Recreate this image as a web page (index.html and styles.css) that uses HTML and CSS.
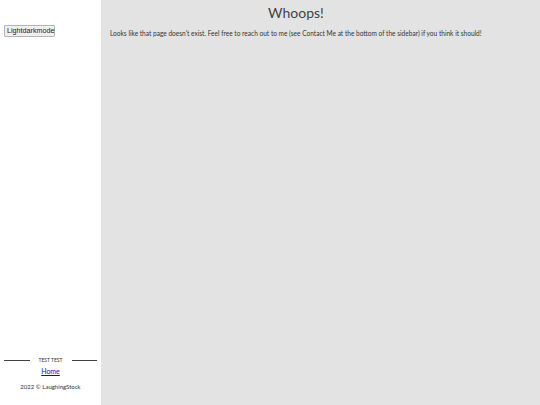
FILE: index.html
```html
<!DOCTYPE html>
<html>
<head>
<meta charset="utf-8">
<link rel="stylesheet" href="styles.css">
</head>
<body>
<div class="layout">
  <aside class="sidebar">
    <div class="top">
      <button class="toggle">Lightdarkmode</button>
    </div>
    <div class="foot">
      <div class="divider"><span class="line"></span><span class="label">TEST TEST</span><span class="line"></span></div>
      <a class="home" href="#">Home</a>
      <div class="copy">2022 © LaughingStock</div>
    </div>
  </aside>
  <main class="main">
    <h1 class="title">Whoops!</h1>
    <p class="msg">Looks like that page doesn't exist. Feel free to reach out to me (see Contact Me at the bottom of the sidebar) if you think it should!</p>
  </main>
</div>
</body>
</html>
```
FILE: styles.css
```css
html, body { margin: 0; padding: 0; }
body { font-family: Lato, "Liberation Sans", sans-serif; color: #333; }
.layout { display: flex; height: 405px; }
.sidebar { width: 101px; background: #fff; display: flex; flex-direction: column; justify-content: space-between; }
.top { padding: 25px 0 0 4px; }
.toggle { display: block; font-family: "Liberation Sans", Arial, sans-serif; font-size: 7.2px; line-height: 8px; padding: 1px 2px; color: #222; background: #efefef; border: 1px solid #b5b5b5; border-radius: 1px; width: 51px; }
.foot { display: flex; flex-direction: column; align-items: center; padding: 0 4px 15px; }
.divider { display: flex; align-items: center; width: 100%; gap: 9px; margin-bottom: 1px; }
.line { flex: 1; height: 1px; background: #444; }
.label { font-size: 5px; color: #333; }
.home { font-size: 7px; color: #1a0dab; margin-top: 3px; }
.copy { font-size: 6px; color: #333; margin-top: 8px; }
.main { flex: 1; background: #e3e3e3; padding: 0 58px 0 9px; }
.title { font-size: 14px; font-weight: 400; text-align: center; margin: 4px 0 0; color: #444; }
.msg { font-size: 6.55px; margin: 9px 0 0; color: #333; white-space: nowrap; }
```
